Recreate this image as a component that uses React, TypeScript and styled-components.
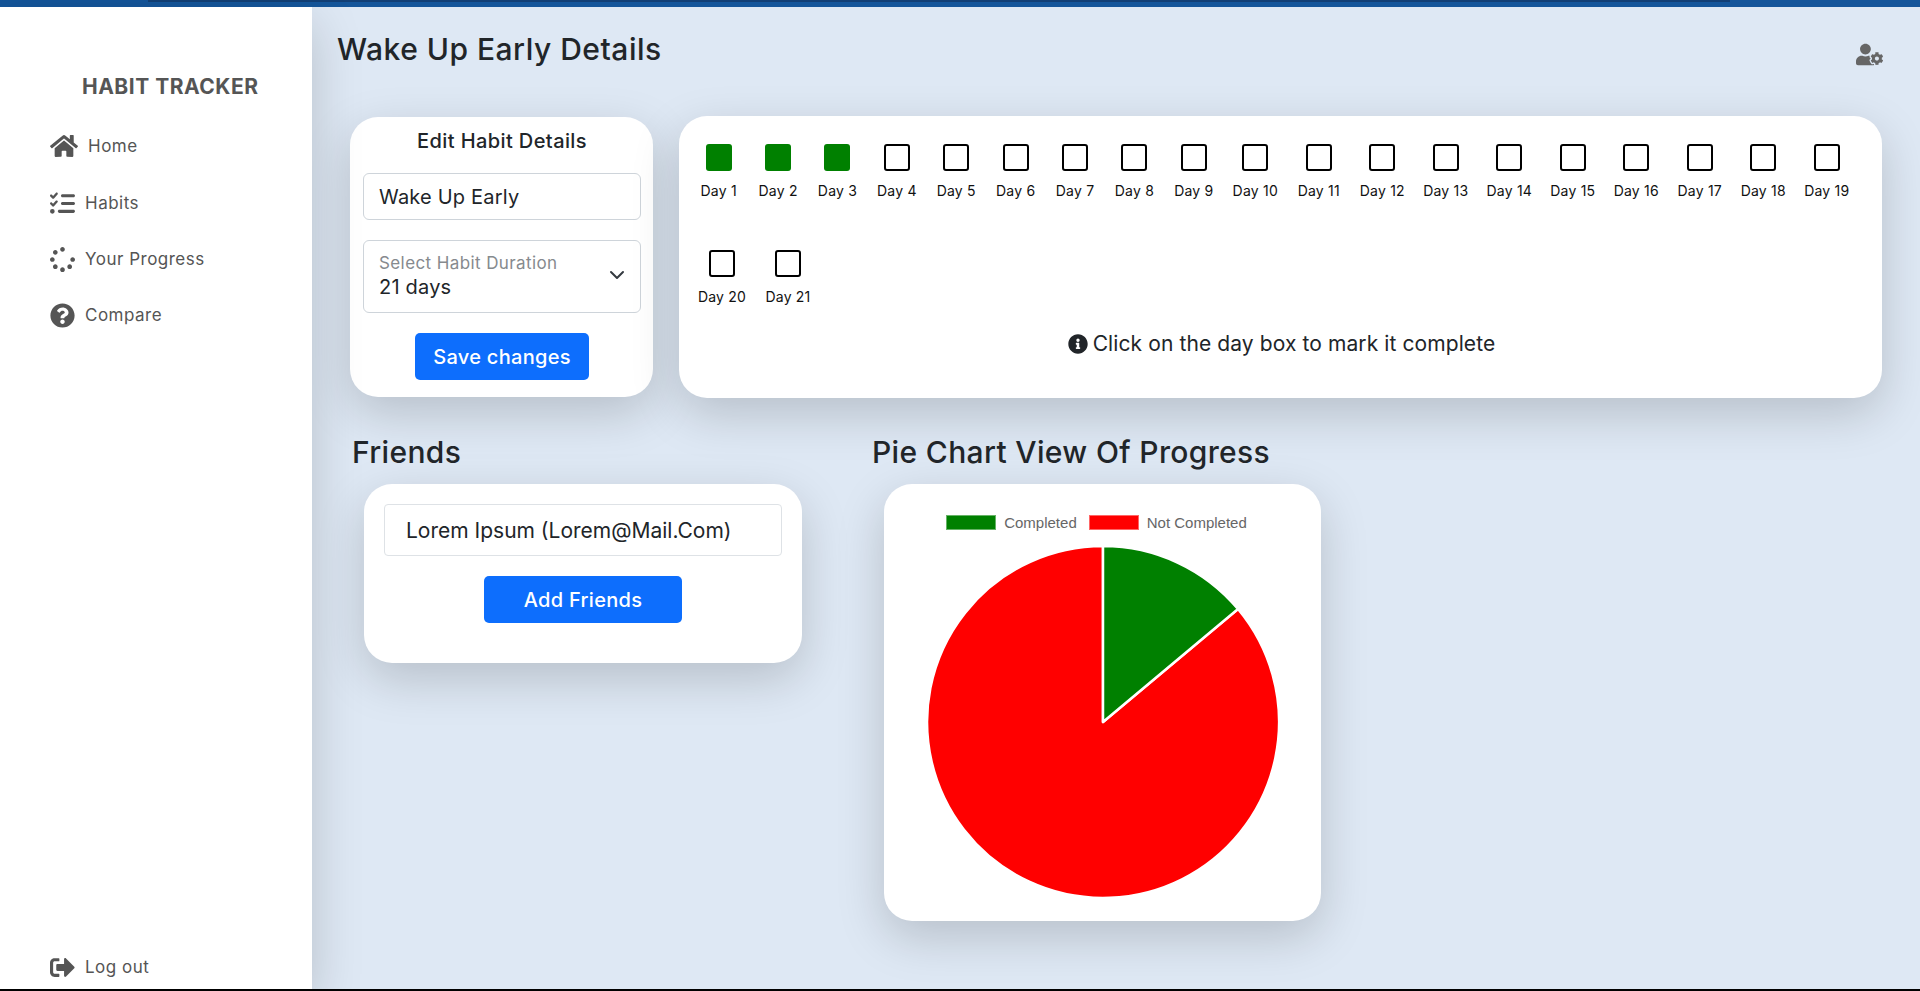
import { FC } from "react";
import styled, { createGlobalStyle } from "styled-components";
import { FaHome, FaQuestionCircle, FaSpinner, FaSignOutAlt, FaUserCog, FaInfoCircle } from "react-icons/fa";
import { FaListCheck } from "react-icons/fa6";

const days = Array.from({ length: 21 }, (_, i) => i + 1);
const doneDays = 3;

const GlobalStyle = createGlobalStyle`
  * { box-sizing: border-box; }
  html, body { margin: 0; padding: 0; height: 100%; overflow: hidden; }
  body { font-family: "Inter", "Liberation Sans", sans-serif; color: #212529; background: #dee8f4; }
`;

const App: FC = () => {
  return (
    <>
      <GlobalStyle />
      <Page>
        <TopBar>
          <TopBarTab />
        </TopBar>
        <Body>
          <SideBar>
            <Brand>HABIT TRACKER</Brand>
            <NavList>
              <NavItem $height={58}>
                <FaHome size={28} />
                <NavLabel>Home</NavLabel>
              </NavItem>
              <NavItem $height={56}>
                <FaListCheck size={25} />
                <NavLabel>Habits</NavLabel>
              </NavItem>
              <NavItem $height={56}>
                <FaSpinner size={25} />
                <NavLabel>Your Progress</NavLabel>
              </NavItem>
              <NavItem $height={56}>
                <FaQuestionCircle size={25} />
                <NavLabel>Compare</NavLabel>
              </NavItem>
            </NavList>
            <LogOut>
              <FaSignOutAlt size={25} />
              <NavLabel>Log out</NavLabel>
            </LogOut>
          </SideBar>
          <Main>
            <Header>
              <PageTitle>Wake Up Early Details</PageTitle>
              <SettingsIcon size={27} />
            </Header>
            <TopRow>
              <EditCard>
                <EditTitle>Edit Habit Details</EditTitle>
                <TextField>Wake Up Early</TextField>
                <SelectField>
                  <SelectText>
                    <SelectHint>Select Habit Duration</SelectHint>
                    <SelectValue>21 days</SelectValue>
                  </SelectText>
                  <svg width="16" height="16" viewBox="0 0 16 16" fill="none" stroke="#343a40" strokeWidth="2" strokeLinecap="round" strokeLinejoin="round">
                    <path d="m2 5 6 6 6-6" />
                  </svg>
                </SelectField>
                <PrimaryButton $width={174} $height={47}>Save changes</PrimaryButton>
              </EditCard>
              <DaysCard>
                <DaysGrid>
                  {days.map((d) => (
                    <DayCell key={d}>
                      <DayBox $done={d <= doneDays} />
                      <DayLabel>Day {d}</DayLabel>
                    </DayCell>
                  ))}
                </DaysGrid>
                <DaysHint>
                  <FaInfoCircle size={20} />
                  Click on the day box to mark it complete
                </DaysHint>
              </DaysCard>
            </TopRow>
            <BottomRow>
              <FriendsColumn>
                <SectionTitle>Friends</SectionTitle>
                <FriendsCard>
                  <FriendField>Lorem Ipsum (Lorem@Mail.Com)</FriendField>
                  <PrimaryButton $width={198} $height={47}>Add Friends</PrimaryButton>
                </FriendsCard>
              </FriendsColumn>
              <ChartColumn>
                <SectionTitle>Pie Chart View Of Progress</SectionTitle>
                <ChartCard>
                  <Legend>
                    <LegendItem>
                      <LegendSwatch $color="green" $border="#66b366" />
                      Completed
                    </LegendItem>
                    <LegendItem>
                      <LegendSwatch $color="red" $border="#ff6666" />
                      Not Completed
                    </LegendItem>
                  </Legend>
                  <svg width="358" height="358" viewBox="-179 -179 358 358">
                    <path d="M0 0 L0 -176 A176 176 0 1 0 135 -113 Z" fill="red" stroke="#fff" strokeWidth="2.5" strokeLinejoin="round" />
                    <path d="M0 0 L0 -176 A176 176 0 0 1 135 -113 Z" fill="green" stroke="#fff" strokeWidth="2.5" strokeLinejoin="round" />
                  </svg>
                </ChartCard>
              </ChartColumn>
            </BottomRow>
          </Main>
        </Body>
        <BottomLine />
      </Page>
    </>
  );
};

export default App;

const Page = styled.div`
  display: flex;
  flex-direction: column;
  height: 991px;
  overflow: hidden;
`;

const TopBar = styled.div`
  height: 7px;
  flex: none;
  background: #14559a;
`;

const TopBarTab = styled.div`
  height: 2px;
  margin: 0 190px 0 148px;
  background: #123f75;
`;

const BottomLine = styled.div`
  height: 2px;
  flex: none;
  background: #000;
`;

const Body = styled.div`
  flex: 1;
  display: flex;
  min-height: 0;
`;

const SideBar = styled.aside`
  width: 312px;
  flex: none;
  display: flex;
  flex-direction: column;
  padding: 61px 0 0 50px;
  background: #fff;
  box-shadow: 0 1rem 3rem rgba(0, 0, 0, 0.175);
  color: #555;
  position: relative;
`;

const Brand = styled.div`
  font-size: 21px;
  line-height: 38px;
  font-weight: 700;
  letter-spacing: 0.5px;
  color: #555;
  margin-left: 32px;
`;

const NavList = styled.nav`
  display: flex;
  flex-direction: column;
  margin-top: 11px;
`;

const NavItem = styled.a<{ $height: number }>`
  display: flex;
  align-items: center;
  height: ${(p) => p.$height}px;
  color: #555;
`;

const NavLabel = styled.span`
  margin-left: 10px;
  font-size: 17px;
  letter-spacing: 0.5px;
`;

const LogOut = styled.a`
  display: flex;
  align-items: center;
  margin-top: auto;
  height: 26px;
  margin-bottom: 9px;
  color: #555;
`;

const Main = styled.main`
  flex: 1;
  min-width: 0;
  padding: 17px 37px 0 25px;
  display: flex;
  flex-direction: column;
`;

const Header = styled.header`
  display: flex;
  justify-content: space-between;
  align-items: center;
  height: 50px;
`;

const SettingsIcon = styled(FaUserCog)`
  margin-top: 10px;
  color: #666;
`;

const PageTitle = styled.h1`
  margin: 0;
  font-size: 30px;
  font-weight: 500;
  letter-spacing: 0.5px;
`;

const TopRow = styled.div`
  display: flex;
  align-items: flex-start;
  gap: 26px;
  margin: 42px 0 0 13px;
`;

const Card = styled.section`
  background: #fff;
  border-radius: 28px;
  box-shadow: 0 1rem 3rem rgba(0, 0, 0, 0.175);
`;

const EditCard = styled(Card)`
  width: 303px;
  height: 280px;
  margin-top: 1px;
  padding: 11px 12px 0 13px;
  display: flex;
  flex-direction: column;
  align-items: center;
`;

const EditTitle = styled.h2`
  margin: 0;
  font-size: 20px;
  line-height: 26px;
  font-weight: 500;
  letter-spacing: 0.4px;
`;

const TextField = styled.div`
  align-self: stretch;
  height: 47px;
  margin-top: 19px;
  padding: 0 15px;
  display: flex;
  align-items: center;
  border: 1px solid #ced4da;
  border-radius: 6px;
  font-size: 20px;
  letter-spacing: 0.2px;
`;

const SelectField = styled.div`
  align-self: stretch;
  height: 73px;
  margin-top: 20px;
  padding: 0 15px 4px;
  display: flex;
  align-items: center;
  justify-content: space-between;
  border: 1px solid #ced4da;
  border-radius: 6px;
`;

const SelectText = styled.div`
  display: flex;
  flex-direction: column;
`;

const SelectHint = styled.span`
  font-size: 17px;
  line-height: 24px;
  letter-spacing: 0.4px;
  color: #868a8e;
`;

const SelectValue = styled.span`
  font-size: 20px;
  line-height: 24px;
  letter-spacing: 0.2px;
`;

const PrimaryButton = styled.button<{ $width: number; $height: number }>`
  width: ${(p) => p.$width}px;
  height: ${(p) => p.$height}px;
  margin-top: 20px;
  border: 0;
  border-radius: 5px;
  background: #0d6efd;
  color: #fff;
  font-family: inherit;
  font-size: 20px;
  font-weight: 500;
  letter-spacing: 0.3px;
`;

const DaysCard = styled(Card)`
  width: 1203px;
  height: 282px;
  padding: 28px 8px 0 10px;
  display: flex;
  flex-direction: column;
`;

const DaysGrid = styled.div`
  display: flex;
  flex-wrap: wrap;
  width: 1175px;
  row-gap: 49px;
`;

const DayCell = styled.div`
  width: 59.4px;
  display: flex;
  flex-direction: column;
  align-items: center;
  &:nth-child(n + 10) { width: 63.5px; }
  &:nth-child(n + 20) { width: 66px; }
`;

const DayBox = styled.div<{ $done: boolean }>`
  width: 26px;
  height: 27px;
  border-radius: 3px;
  border: ${(p) => (p.$done ? "none" : "2px solid #000")};
  background: ${(p) => (p.$done ? "green" : "#fff")};
`;

const DayLabel = styled.span`
  margin-top: 10px;
  font-size: 14px;
  line-height: 20px;
  letter-spacing: 0.2px;
  white-space: nowrap;
  color: #111;
`;

const DaysHint = styled.p`
  margin: 24px 0 0;
  display: flex;
  align-items: center;
  justify-content: center;
  gap: 5px;
  font-size: 21px;
  line-height: 26px;
  letter-spacing: 0.1px;
`;

const BottomRow = styled.div`
  display: flex;
  align-items: flex-start;
  margin: 35px 0 0 15px;
`;

const FriendsColumn = styled.div`
  width: 520px;
`;

const ChartColumn = styled.div`
  flex: 1;
`;

const SectionTitle = styled.h2`
  margin: 0;
  font-size: 30px;
  line-height: 38px;
  font-weight: 500;
  letter-spacing: 0.35px;
`;

const FriendsCard = styled(Card)`
  width: 438px;
  height: 179px;
  margin: 13px 0 0 12px;
  padding: 20px 20px 0;
  display: flex;
  flex-direction: column;
  align-items: center;
`;

const FriendField = styled.div`
  align-self: stretch;
  height: 52px;
  padding: 0 21px;
  display: flex;
  align-items: center;
  border: 1px solid #dee2e6;
  border-radius: 4px;
  font-size: 21px;
`;

const ChartCard = styled(Card)`
  width: 437px;
  height: 437px;
  margin: 13px 0 0 12px;
  padding-top: 31px;
  display: flex;
  flex-direction: column;
  align-items: center;
`;

const Legend = styled.div`
  display: flex;
  flex: none;
  justify-content: center;
  gap: 12px;
  height: 28px;
  margin-right: 12px;
  font-family: "Liberation Sans", Arial, sans-serif;
  font-size: 15px;
  color: #666;
`;

const LegendItem = styled.div`
  display: flex;
  align-items: flex-start;
  gap: 8px;
  line-height: 16px;
`;

const LegendSwatch = styled.span<{ $color: string; $border: string }>`
  width: 50px;
  height: 15px;
  background: ${(p) => p.$color};
  border: 1px solid ${(p) => p.$border};
`;
